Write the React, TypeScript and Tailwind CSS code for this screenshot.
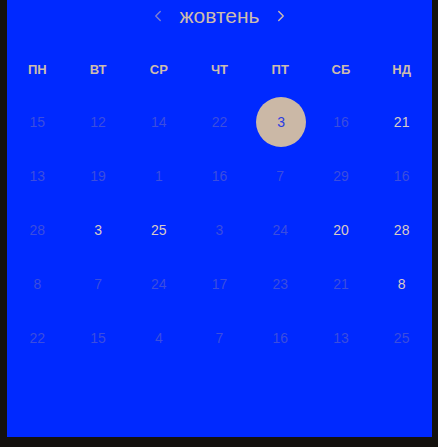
import React from 'react';
import { ChevronLeft, ChevronRight } from 'lucide-react';

const WEEKDAYS = ['ПН', 'ВТ', 'СР', 'ЧТ', 'ПТ', 'СБ', 'НД'];

// [day, active]
const ROWS: [number, boolean][][] = [
    [[15, false], [12, false], [14, false], [22, false], [3, true], [16, false], [21, true]],
    [[13, false], [19, false], [1, false], [16, false], [7, false], [29, false], [16, false]],
    [[28, false], [3, true], [25, true], [3, false], [24, false], [20, true], [28, true]],
    [[8, false], [7, false], [24, false], [17, false], [23, false], [21, false], [8, true]],
    [[22, false], [15, false], [4, false], [7, false], [16, false], [13, false], [25, false]],
];

export default function App() {
    return (
        <div className="w-[438px] h-[447px] bg-[#14110e] overflow-hidden" style={{ fontFamily: '"Liberation Sans", Arial, sans-serif' }}>
            <div className="ml-[7px] w-[425px] h-[437px] bg-[#0029ff]">
                {/* Month header */}
                <div className="h-8 flex items-center justify-center gap-3">
                    <ChevronLeft className="w-[18px] h-[18px] text-[#7f80d0]" strokeWidth={1.8} />
                    <span className="text-[21px] text-[#cdbcae]">жовтень</span>
                    <ChevronRight className="w-[18px] h-[18px] text-[#cdbcae]" strokeWidth={1.8} />
                </div>

                {/* Weekdays */}
                <div className="grid grid-cols-7 mt-7 h-5 items-center">
                    {WEEKDAYS.map((d) => (
                        <div key={d} className="text-center text-[13px] font-bold text-[#cdbcae]">
                            {d}
                        </div>
                    ))}
                </div>

                {/* Days */}
                <div className="pt-[15px]">
                    {ROWS.map((row, i) => (
                        <div key={i} className="grid grid-cols-7 h-[54px] items-center">
                            {row.map(([day, active], j) => {
                                const selected = i === 0 && j === 4;
                                return (
                                    <div key={j} className="flex items-center justify-center">
                                        {selected ? (
                                            <span className="w-[50px] h-[50px] ml-[2px] rounded-full bg-[#cbb8a6] flex items-center justify-center text-sm text-[#2a3ce0]">
                                                {day}
                                            </span>
                                        ) : (
                                            <span className={active ? 'text-sm text-[#d9cbc6]' : 'text-sm text-[#3b4de0]'}>
                                                {day}
                                            </span>
                                        )}
                                    </div>
                                );
                            })}
                        </div>
                    ))}
                </div>
            </div>
        </div>
    );
}
